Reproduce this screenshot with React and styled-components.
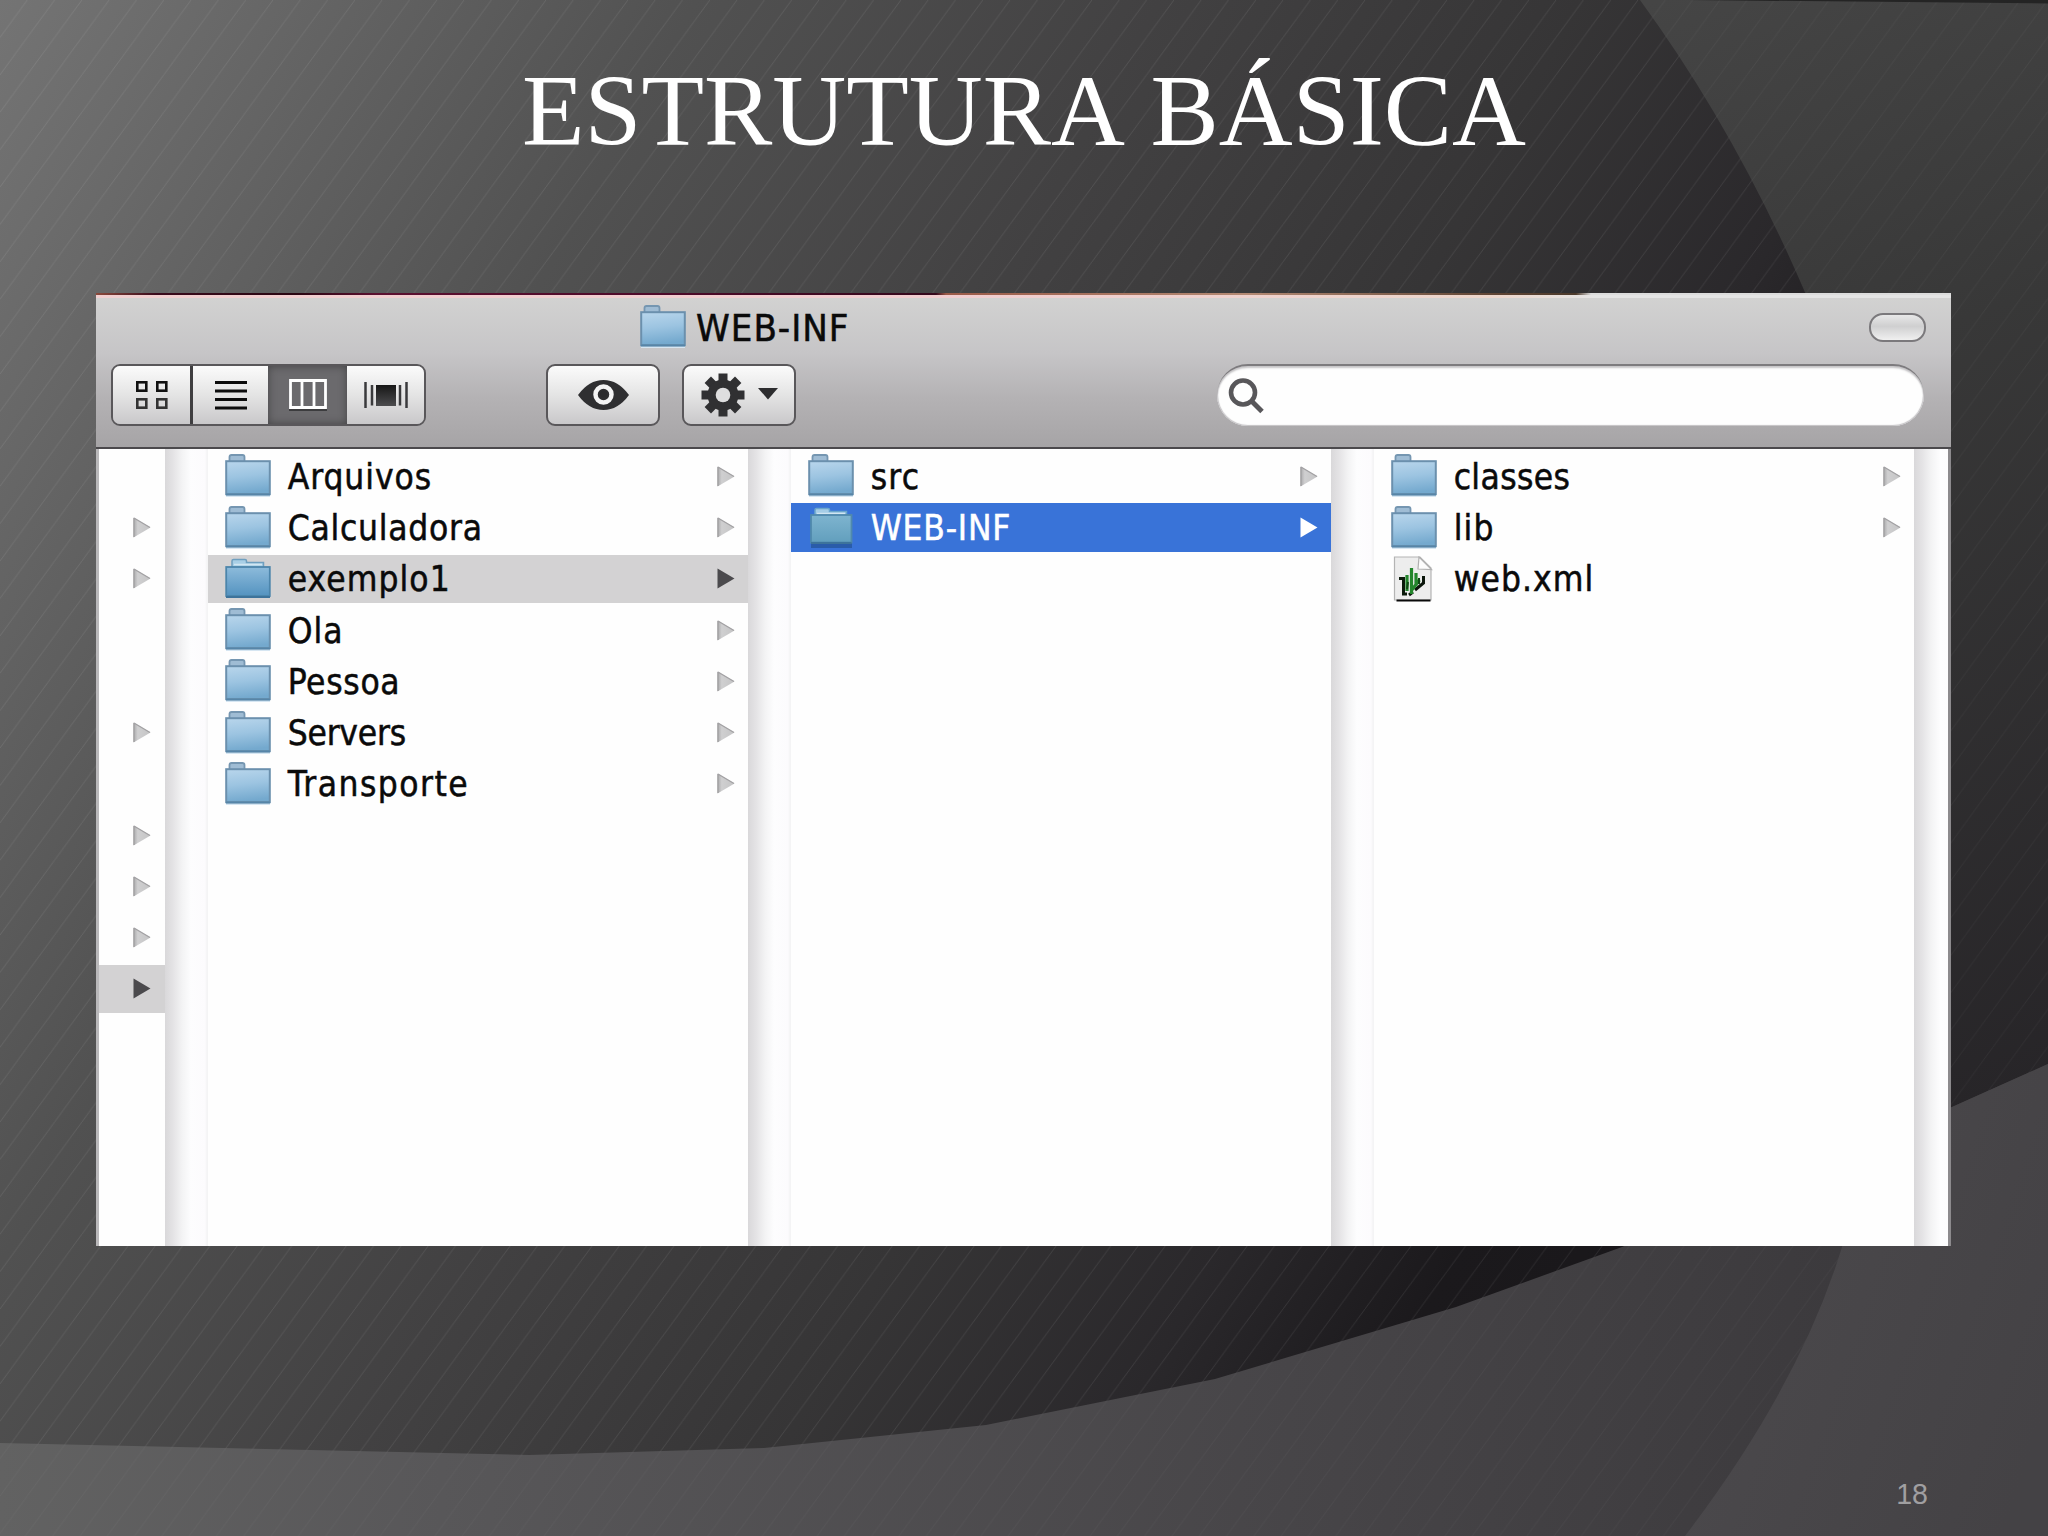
import React from 'react';
//styles
import styled, { createGlobalStyle } from 'styled-components';

// rows of the parent column, only the arrows are in view
const parentRows = ['none', 'arrow', 'arrow', 'none', 'none', 'arrow', 'none', 'arrow', 'arrow', 'arrow', 'selected'];

const projects = [
    { name: 'Arquivos', spacing: '0.95px' },
    { name: 'Calculadora', spacing: '0.75px' },
    { name: 'exemplo1', spacing: '1.1px', state: 'selected' },
    { name: 'Ola', spacing: '1px' },
    { name: 'Pessoa', spacing: '0.7px' },
    { name: 'Servers', spacing: '-0.2px' },
    { name: 'Transporte', spacing: '1.5px' },
];

const contents = [
    { name: 'src', spacing: '1.2px' },
    { name: 'WEB-INF', spacing: '0.8px', state: 'active' },
];

const webInf = [
    { name: 'classes', spacing: '0.4px' },
    { name: 'lib', spacing: '1.2px' },
    { name: 'web.xml', spacing: '1.05px', file: true },
];

const Backdrop = () => (
    <BackdropSvg viewBox="0 0 2048 1536" aria-hidden="true">
        <defs>
            <linearGradient id="base" gradientUnits="userSpaceOnUse" x1="0" y1="0" x2="2226" y2="1225">
                <stop offset="0" stopColor="#747474" />
                <stop offset="0.083" stopColor="#686868" />
                <stop offset="0.24" stopColor="#515151" />
                <stop offset="0.4" stopColor="#424142" />
                <stop offset="0.545" stopColor="#363536" />
                <stop offset="0.657" stopColor="#2a282b" />
                <stop offset="0.74" stopColor="#1b191c" />
                <stop offset="1" stopColor="#151316" />
            </linearGradient>
            <linearGradient id="disc" gradientUnits="userSpaceOnUse" x1="1660" y1="0" x2="2048" y2="1080">
                <stop offset="0" stopColor="#454545" />
                <stop offset="0.35" stopColor="#383838" />
                <stop offset="1" stopColor="#272528" />
            </linearGradient>
            <linearGradient id="floor" gradientUnits="userSpaceOnUse" x1="0" y1="1440" x2="1840" y2="1440">
                <stop offset="0" stopColor="#626262" />
                <stop offset="0.24" stopColor="#585759" />
                <stop offset="0.7" stopColor="#474548" />
                <stop offset="1" stopColor="#3c3a3d" />
            </linearGradient>
            <linearGradient id="corner" gradientUnits="userSpaceOnUse" x1="1750" y1="1300" x2="2048" y2="1400">
                <stop offset="0" stopColor="#4a484b" />
                <stop offset="1" stopColor="#444245" />
            </linearGradient>
            <pattern id="stripes" width="27.3" height="37.4" patternUnits="userSpaceOnUse">
                <path d="M-1 38.77 L28.3 -1.37" stroke="#fff" strokeWidth="0.8" opacity="0.11" />
            </pattern>
            <clipPath id="discClip">
                <path d="M1640 0 Q1735 130 1804 290 C1925 590 1925 950 1842 1247 Q1800 1385 1685 1536 H2048 V0 Z" />
            </clipPath>
        </defs>
        <rect width="2048" height="1536" fill="url(#base)" />
        <rect width="2048" height="1536" fill="url(#stripes)" />
        <g clipPath="url(#discClip)">
            <rect width="2048" height="1536" fill="url(#disc)" />
            <rect width="2048" height="1536" fill="url(#stripes)" opacity="0.5" />
            <path d="M1690 0 H2048 V3.5 Z" fill="#242424" />
        </g>
        <path
            d="M0 1443 L529 1455 L764 1448 L986 1425 L1215 1379 L1456 1307 L1622 1247 L1952 1107 L2048 1064 V1536 H0 Z"
            fill="url(#floor)"
        />
        <path
            d="M0 1443 L529 1455 L764 1448 L986 1425 L1215 1379 L1456 1307 L1622 1247 L1952 1107 L2048 1064 V1536 H0 Z"
            fill="url(#stripes)"
            opacity="0.4"
        />
        <g clipPath="url(#discClip)">
            <path d="M1622 1247 L1952 1107 L2048 1064 V1536 H1600 Z" fill="url(#corner)" />
        </g>
    </BackdropSvg>
);

const Folder = () => (
    <Icon width="46" height="44" viewBox="0 0 46 44">
        <defs>
            <linearGradient id="folderFill" x1="0" y1="0" x2="0.15" y2="1">
                <stop offset="0" stopColor="#b9d6ec" />
                <stop offset="0.5" stopColor="#9cc4e1" />
                <stop offset="1" stopColor="#74a9ce" />
            </linearGradient>
        </defs>
        <rect x="1" y="40" width="44" height="3" fill="#d6e6f2" />
        <path d="M4.5 9 V3 Q4.5 1 6.5 1 H17.5 Q19.5 1 19.5 3 V9 Z" fill="#9fbcd4" stroke="#7596b1" strokeWidth="1.8" />
        <rect x="1.2" y="7.2" width="43.6" height="33" fill="url(#folderFill)" stroke="#6b90ad" strokeWidth="2" />
        <path d="M1 40.5 H45" stroke="#5685a8" strokeWidth="2" />
    </Icon>
);

const OpenFolder = ({ active }) => (
    <Icon width="46" height="44" viewBox="0 0 46 44">
        <defs>
            <linearGradient id={active ? 'openActive' : 'openGrey'} x1="0" y1="0" x2="0" y2="1">
                <stop offset="0" stopColor={active ? '#7eb4cf' : '#8dbbdb'} />
                <stop offset="1" stopColor={active ? '#629fbd' : '#5493c0'} />
            </linearGradient>
        </defs>
        <path
            d="M7 13 V4 Q7 2.5 8.5 2.5 H20 Q21.5 2.5 21.5 4 V5.5 H38.5 V13 Z"
            fill={active ? '#a5cde6' : '#a9cfe6'}
            stroke={active ? '#6aa5cc' : '#6f9fbf'}
            strokeWidth="1.5"
        />
        <path d="M9 7.5 H37" stroke="#d2e6f2" strokeWidth="1.5" />
        {active && <rect x="3" y="36" width="41" height="6" fill="#2a5ca9" />}
        <rect
            x={active ? 3 : 1.2}
            y={active ? 9 : 10}
            width={active ? 40.5 : 43.6}
            height={active ? 27.5 : 29}
            fill={active ? 'url(#openActive)' : 'url(#openGrey)'}
            stroke={active ? '#5089ac' : '#4c85ab'}
            strokeWidth="1.8"
        />
        <path d={active ? 'M3 37 H43.5' : 'M1 40 H45'} stroke="#3d739b" strokeWidth="2" />
    </Icon>
);

const XmlFile = () => (
    <Icon width="46" height="46" viewBox="0 0 46 46">
        <path d="M3.5 1 H29 L40 12 V44 H3.5 Z" fill="#ededed" stroke="#b4b4b4" strokeWidth="1.2" />
        <path d="M28 1 L27 13 L40.5 13.5 Z" fill="#fcfcfc" stroke="#b0b0b0" strokeWidth="1.2" />
        <path d="M8 22.5 H12.5 V38 H16" fill="none" stroke="#0b1a0b" strokeWidth="3" />
        <path d="M18 39 L22 36 M24 34 L32.5 27 V20" fill="none" stroke="#0b160b" strokeWidth="3" />
        <path d="M16 19 V35 M20.5 12 V38 M25 17 V30 M28.5 24 L20 35" fill="none" stroke="#23862c" strokeWidth="3.2" />
        <path d="M16 33 L17 26 M28 22 V28" stroke="#0f4a14" strokeWidth="2" />
        <path d="M5.5 44.5 H39.5" stroke="#0a0a0a" strokeWidth="2.2" />
    </Icon>
);

const Arrow = ({ state }) => {
    const solid = state === 'selected' ? '#4b4a4d' : state === 'active' ? '#ffffff' : null;
    return (
        <Icon width="18" height="21" viewBox="0 0 18 21">
            <defs>
                <linearGradient id="arrowFill" x1="0" y1="0" x2="1" y2="0">
                    <stop offset="0" stopColor="#a9a8aa" />
                    <stop offset="0.25" stopColor="#cfcfd0" />
                    <stop offset="1" stopColor="#c4c4c5" />
                </linearGradient>
            </defs>
            <path d="M0.5 0.5 L17.5 10.5 L0.5 20.5 Z" fill={solid || 'url(#arrowFill)'} />
            {!solid && <path d="M1 1 V20 M1 1 L17 10.5" stroke="#a2a1a3" strokeWidth="1.3" fill="none" />}
        </Icon>
    );
};

const Row = ({ item }) => (
    <RowStyle $state={item.state}>
        {item.file ? <XmlFile /> : item.state ? <OpenFolder active={item.state === 'active'} /> : <Folder />}
        <Name $spacing={item.spacing}>{item.name}</Name>
        {!item.file && <Arrow state={item.state} />}
    </RowStyle>
);

const Column = ({ items }) => (
    <ColumnStyle>
        {items.map((item) => (
            <Row key={item.name} item={item} />
        ))}
    </ColumnStyle>
);

const Toolbar = () => (
    <Tools>
        <Segments>
            <Segment $width="80px">
                <svg width="34" height="30" viewBox="0 0 34 30">
                    <g fill="none" stroke="#111" strokeWidth="2.6">
                        <rect x="2.3" y="2.3" width="9" height="8.4" />
                        <rect x="22.3" y="2.3" width="9" height="8.4" />
                        <rect x="2.3" y="19.3" width="9" height="8.4" stroke="#333" />
                        <rect x="22.3" y="19.3" width="9" height="8.4" stroke="#333" />
                    </g>
                </svg>
            </Segment>
            <Segment $width="75px">
                <svg width="32" height="30" viewBox="0 0 32 30">
                    <path d="M0 2.5 H32 M0 11 H32 M0 19.5 H32 M0 28 H32" stroke="#0c0c0c" strokeWidth="3" />
                </svg>
            </Segment>
            <Segment $width="79px" $on>
                <svg width="38" height="32" viewBox="0 0 38 32">
                    <path d="M0 31 H38" stroke="#3c3c3e" strokeWidth="2" />
                    <path d="M1.5 1.5 H36.5 V28.5 H1.5 Z M13 1 V29 M25 1 V29" fill="none" stroke="#fff" strokeWidth="2.8" />
                </svg>
            </Segment>
            <Segment $width="77px">
                <svg width="44" height="28" viewBox="0 0 44 28">
                    <defs>
                        <linearGradient id="cover" x1="0" y1="0" x2="0" y2="1">
                            <stop offset="0" stopColor="#161616" />
                            <stop offset="1" stopColor="#4c4c4e" />
                        </linearGradient>
                    </defs>
                    <path d="M1.5 1 V27 M42.5 1 V27" stroke="#3a3a3c" strokeWidth="2.5" />
                    <path d="M8 4 V24.5 M36 4 V24.5" stroke="#3a3a3c" strokeWidth="2.5" />
                    <rect x="12" y="4" width="20" height="21" fill="url(#cover)" />
                </svg>
            </Segment>
        </Segments>
        <Button $left="120px">
            <svg width="53" height="32" viewBox="0 0 53 32">
                <path d="M1 16 Q12 1 26.5 1 Q41 1 52 16 Q41 31 26.5 31 Q12 31 1 16 Z" fill="#2f2f31" />
                <circle cx="26.5" cy="15.5" r="8" fill="none" stroke="#f4f4f4" strokeWidth="4.5" />
                <circle cx="26.5" cy="15" r="3.5" fill="#2c2c2e" />
            </svg>
        </Button>
        <Button $left="22px">
            <svg width="78" height="44" viewBox="0 0 78 44">
                <g fill="#303032">
                    {[0, 45, 90, 135].map((angle) => (
                        <rect key={angle} x="18.5" y="0.5" width="9" height="43" transform={`rotate(${angle} 23 22)`} />
                    ))}
                    <circle cx="23" cy="22" r="15.5" />
                </g>
                <circle cx="23" cy="22" r="7.3" fill="#dededf" />
                <path d="M58 15 H78 L68 26.5 Z" fill="#2d2d2f" />
            </svg>
        </Button>
        <Search>
            <svg width="36" height="36" viewBox="0 0 36 36">
                <circle cx="15" cy="14.5" r="12" fill="none" stroke="#58575a" strokeWidth="4.6" />
                <path d="M23.5 23 L34 33.5" stroke="#58575a" strokeWidth="5" />
            </svg>
        </Search>
    </Tools>
);

const App = () => {
    return (
        <Slide>
            <GlobalStyle />
            <Backdrop />
            <Title>ESTRUTURA BÁSICA</Title>
            <Finder>
                <Header>
                    <TitleBar>
                        <Folder />
                        <WindowName>WEB-INF</WindowName>
                        <Pill />
                    </TitleBar>
                    <Toolbar />
                </Header>
                <Browser>
                    <ParentColumn>
                        {parentRows.map((row, i) => (
                            <ParentRow key={i} $state={row}>
                                {row !== 'none' && <Arrow state={row} />}
                            </ParentRow>
                        ))}
                    </ParentColumn>
                    <Divider />
                    <Column items={projects} />
                    <Divider />
                    <Column items={contents} />
                    <Divider />
                    <Column items={webInf} />
                    <Divider $last />
                </Browser>
            </Finder>
            <PageNumber>18</PageNumber>
        </Slide>
    );
};

const GlobalStyle = createGlobalStyle`
    body {
        margin: 0;
    }
    * {
        box-sizing: border-box;
    }
`;

const Slide = styled.div`
    position: relative;
    display: flex;
    flex-direction: column;
    width: 2048px;
    height: 1536px;
    overflow: hidden;
    background: #403f40;
`;

const BackdropSvg = styled.svg`
    position: absolute;
    inset: 0;
    width: 100%;
    height: 100%;
`;

const Title = styled.h1`
    position: relative;
    height: 293px;
    margin: 0;
    padding-top: 52px;
    color: #fff;
    font: 400 102.4px/118px "Liberation Serif", serif;
    font-kerning: none;
    text-align: center;
    white-space: nowrap;
`;

const Finder = styled.div`
    position: relative;
    display: flex;
    flex-direction: column;
    width: 1855px;
    height: 953px;
    margin-left: 96px;
    color: #0a0a0a;
    font: 35px "DejaVu Sans Condensed", "DejaVu Sans", sans-serif;
    font-stretch: condensed;
    -webkit-text-stroke: 0.5px;
`;

const Header = styled.div`
    height: 156px;
    border-bottom: 2px solid #4b494c;
    background:
        linear-gradient(90deg, #8a4a3c 0, #3a0a1c 60px, #2a0612 200px, #5c1030 280px, #4e0a2a 560px, #35081c 840px, #9a5a48 850px, #b48a74 1150px, #5e4434 1400px, #4c3a2c 1480px, #dcdcdc 1495px) 0 0 / 100% 2px no-repeat,
        linear-gradient(90deg, #f0cfd0 0, #f0cdd0 840px, #ecd6cc 1400px, #e4e4e4 1500px) 0 2px / 100% 3px no-repeat,
        linear-gradient(#d3d3d2 0, #c6c5c7 60px, #b4b2b4 105px, #a6a4a6 100%);
`;

const TitleBar = styled.div`
    display: flex;
    align-items: center;
    height: 71px;
    padding: 0 25px 3px 544px;
`;

const WindowName = styled.span`
    flex: 1;
    padding: 2px 0 0 10px;
    font-size: 38px;
    letter-spacing: 1px;
    line-height: 40px;
`;

const Pill = styled.div`
    width: 57px;
    height: 29px;
    border: 2px solid #7b797c;
    border-radius: 14px;
    background: linear-gradient(#e8e8e8, #cfcfd0 45%, #f0f0f0);
`;

const Tools = styled.div`
    display: flex;
    height: 62px;
    padding: 0 27px 0 15px;
`;

const Segments = styled.div`
    display: flex;
    width: 315px;
    border: 2px solid #59575a;
    border-radius: 9px;
    overflow: hidden;
`;

const Segment = styled.div`
    display: flex;
    align-items: center;
    justify-content: center;
    width: ${({ $width }) => $width};
    background: ${({ $on }) => ($on ? '#6b6a6d' : 'linear-gradient(#fbfbfb, #e4e4e4 50%, #c9c8ca)')};
    box-shadow: ${({ $on }) => ($on ? 'inset 0 0 9px #454446' : 'none')};

    &:first-child {
        border-right: 3px solid #3f3e40;
    }
`;

const Button = styled.div`
    display: flex;
    align-items: center;
    justify-content: center;
    width: 114px;
    margin-left: ${({ $left }) => $left};
    border: 2.5px solid #59575a;
    border-radius: 9px;
    background: linear-gradient(#fbfbfb, #e4e4e4 50%, #c9c8ca);
`;

const Search = styled.div`
    display: flex;
    align-items: center;
    width: 707px;
    margin-left: auto;
    padding: 0 0 0 11px;
    border-top: 2px solid #7d7b7e;
    border-radius: 31px;
    background: #fefefe;
    box-shadow: inset 0 2px 2px #c9c8ca, inset 0 0 1px 1px #c2c0c3;
`;

const Browser = styled.div`
    display: flex;
    flex: 1;
    border-left: 3px solid #b9b8ba;
    border-right: 3px solid #8c8a8d;
    background: #fefefe;
`;

const ParentColumn = styled.div`
    display: flex;
    flex-direction: column;
    gap: 2.75px;
    width: 66px;
    padding-top: 3px;
`;

const ParentRow = styled.div`
    display: flex;
    align-items: center;
    justify-content: flex-end;
    height: 48.5px;
    padding-right: 14px;
    background: ${({ $state }) => ($state === 'selected' ? '#d3d2d3' : 'none')};
`;

const ColumnStyle = styled.div`
    display: flex;
    flex-direction: column;
    gap: 2.75px;
    width: 540.5px;
    padding-top: 3px;
`;

const RowStyle = styled.div`
    display: flex;
    align-items: center;
    height: 48.5px;
    padding: 0 13px 0 17px;
    color: ${({ $state }) => ($state === 'active' ? '#fff' : '#0a0a0a')};
    background: ${({ $state }) => ($state === 'active' ? '#3973d8' : $state === 'selected' ? '#d3d2d3' : 'none')};
`;

const Icon = styled.svg`
    flex: none;
    display: block;
`;

const Name = styled.span`
    flex: 1;
    padding: 1px 0 0 17px;
    line-height: 40px;
    letter-spacing: ${({ $spacing }) => $spacing};
`;

const Divider = styled.div`
    width: ${({ $last }) => ($last ? '34px' : '42.7px')};
    background: linear-gradient(90deg, #d9d8da 0, #e4e3e5 8px, #f3f3f4 17px, #fdfdfe 26px, #fcfbfd 40px, #f4f4f5 42px);
`;

const PageNumber = styled.div`
    position: relative;
    margin: 231px 120px 0 auto;
    color: #a09fa1;
    font: 28.6px/34px "Liberation Sans", sans-serif;
`;

export default App;
